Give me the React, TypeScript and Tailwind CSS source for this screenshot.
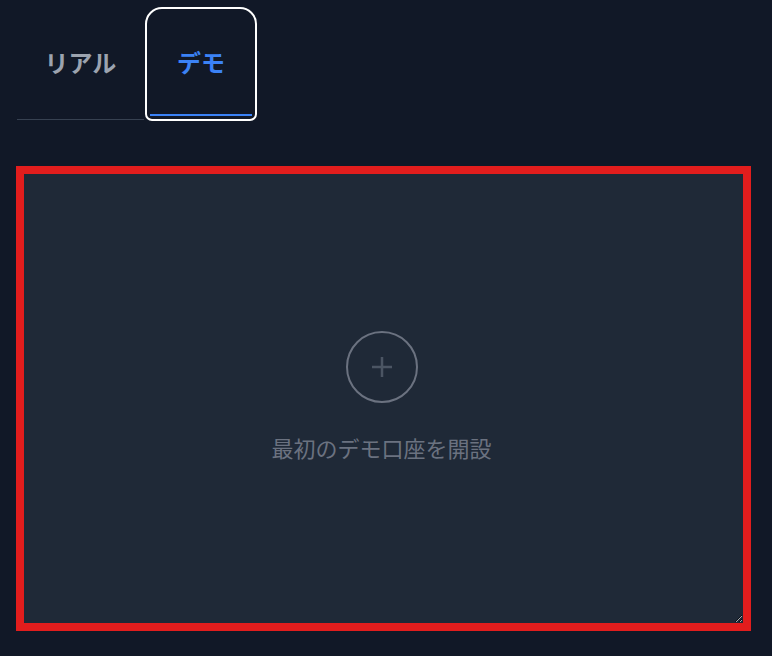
import React from 'react';

export default function App() {
  return (
    <div
      className="min-h-[656px] w-full bg-[#111827] pt-[12px] pl-[17px] pr-[21px]"
      style={{ fontFamily: '"Noto Sans CJK JP", "Noto Sans", sans-serif' }}
    >
      <div className="flex items-start">
        <button className="h-[108px] w-[127px] border-b border-[#374151] pb-[8px] text-[24px] font-bold text-[#9ca3af]">
          リアル
        </button>
        <button className="ml-[6px] flex h-[104px] w-[102px] flex-col rounded-t-xl rounded-b-[2px] text-[24px] font-bold text-[#3b82f6] outline-2 outline-offset-[3px] outline-white">
          <span className="flex flex-1 items-center justify-center pb-[2px]">デモ</span>
          <span className="h-[2px] w-full bg-[#3b82f6]" />
        </button>
      </div>

      <div className="ml-[-1px] mt-[46px] h-[465px] w-[735px] resize overflow-auto border-[8px] border-[#e21d1d] bg-[#1f2937]">
        <div className="flex h-full flex-col items-center justify-center pr-[4px] pb-[2px]">
          <div className="flex h-[72px] w-[72px] items-center justify-center rounded-full border-2 border-[#6b7280]">
            <svg width="24" height="24" viewBox="0 0 24 24" fill="none" stroke="#4b5563" strokeWidth="2.5" strokeLinecap="butt">
              <path d="M12 2v20M2 12h20" />
            </svg>
          </div>
          <p className="mt-[28px] text-[22px] text-[#6b7280]">最初のデモ口座を開設</p>
        </div>
      </div>
    </div>
  );
}
